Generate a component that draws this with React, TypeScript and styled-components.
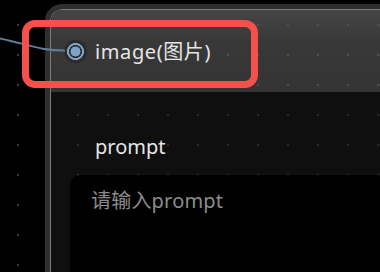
import React from "react";
import styled, { createGlobalStyle } from "styled-components";

const Global = createGlobalStyle`
  html, body { margin: 0; padding: 0; }
  body {
    width: 380px;
    height: 272px;
    overflow: hidden;
    background-color: #000;
    background-image: radial-gradient(circle, #3a3a3a 0.9px, transparent 1.3px);
    background-size: 30px 30px;
    background-position: 3px 10px;
    background-attachment: fixed;
    font-family: "Noto Sans", "Noto Sans CJK SC", sans-serif;
  }
`;

const Canvas = styled.div`
  position: relative;
  width: 380px;
  height: 272px;
  overflow: hidden;
  padding: 4px 0 0 45px;
  box-sizing: border-box;
`;

const Node = styled.div`
  width: 360px;
  height: 300px;
  border: 5px solid #2f2f2f;
  border-radius: 17px;
  box-sizing: border-box;
  display: flex;
  flex-direction: column;
  overflow: hidden;
  box-shadow: inset 0 0 0 1px #7c7c7c;
`;

const Header = styled.div`
  height: 82px;
  flex: none;
  display: flex;
  align-items: center;
  gap: 8px;
  padding: 0 0 0 13px;
  margin: 1px 0 0 1px;
  border-radius: 11px 11px 0 0;
  background-color: #373737;
  background-image: radial-gradient(circle, #4f4f4f 0.9px, transparent 1.3px),
    linear-gradient(#454545 0%, #383838 40%, #343434 100%);
  background-size: 30px 30px, 100% 100%;
  background-position: 3px 10px, 0 0;
  background-attachment: fixed, scroll;
`;

const Handle = styled.span`
  width: 23px;
  height: 23px;
  border-radius: 50%;
  background: radial-gradient(
    circle,
    #7fa3c6 0 4.8px,
    #2b2b2b 5.2px 6.3px,
    #7fa3c6 6.7px 8.3px,
    #2b2b2b 8.7px
  );
  flex: none;
`;

const Title = styled.span`
  color: #e6e6e6;
  font-size: 20px;
  letter-spacing: 0.6px;
  margin-top: -1px;
`;

const Body = styled.div`
  flex: 1;
  margin-left: 1px;
  background-color: #0f0f0f;
  background-image: radial-gradient(circle, #2c2c2c 0.9px, transparent 1.3px);
  background-size: 30px 30px;
  background-position: 3px 10px;
  background-attachment: fixed;
  padding: 42px 0 0 19px;
  display: flex;
  flex-direction: column;
`;

const Label = styled.div`
  color: #e6e6e6;
  font-size: 20px;
  padding-left: 25px;
  line-height: 26px;
`;

const Input = styled.div`
  margin-top: 15px;
  background: #000;
  border-radius: 10px 0 0 0;
  height: 120px;
  padding: 11px 0 0 21px;
  color: #8c8c8c;
  font-size: 20px;
  letter-spacing: 0.2px;
  line-height: 30px;
`;

const Highlight = styled.div`
  position: absolute;
  left: 22px;
  top: 20px;
  width: 236px;
  height: 68px;
  box-sizing: border-box;
  border: 7px solid #f4504c;
  border-radius: 13px;
  pointer-events: none;
`;

const Edge = styled.svg`
  position: absolute;
  left: 0;
  top: 0;
  pointer-events: none;
`;

export default function App() {
  return (
    <>
      <Global />
      <Canvas>
        <Node>
          <Header>
            <Handle />
            <Title>image(图片)</Title>
          </Header>
          <Body>
            <Label>prompt</Label>
            <Input>请输入prompt</Input>
          </Body>
        </Node>
        <Edge width="80" height="60" viewBox="0 0 80 60">
          <path d="M-2 38 C 28 44, 38 50.5, 65 50.5" fill="none" stroke="#5f7f9c" strokeWidth="2" />
        </Edge>
        <Highlight />
      </Canvas>
    </>
  );
}
